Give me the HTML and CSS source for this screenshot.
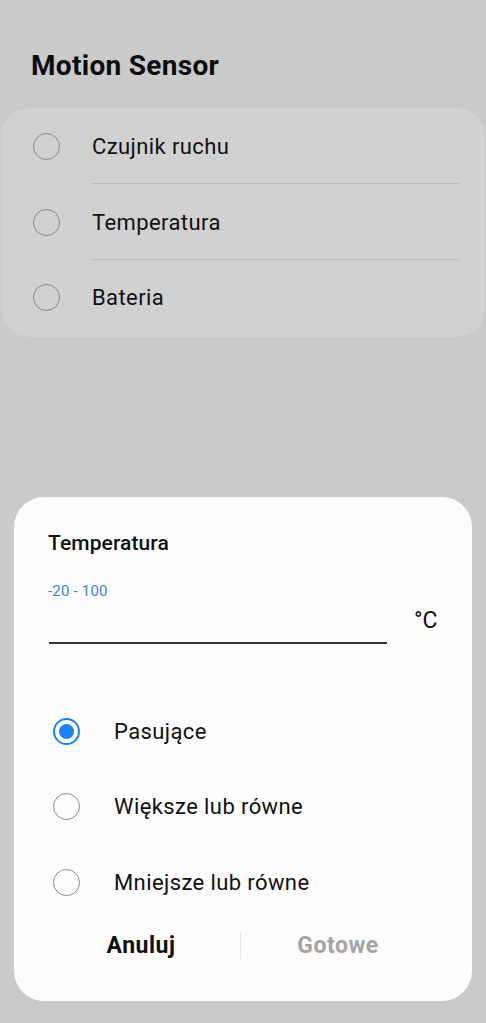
FILE: index.html
```html
<!DOCTYPE html>
<html lang="pl">
<head>
    <meta charset="UTF-8">
    <meta name="viewport" content="width=device-width, initial-scale=1.0">
    <title>Motion Sensor</title>
    <link rel="stylesheet" href="styles.css">
</head>
<body>
    <div class="page-header">
        <h1 class="page-title">Motion Sensor</h1>
    </div>

    <div class="option-card">
        <div class="option-row">
            <span class="radio"></span>
            <span class="option-label">Czujnik ruchu</span>
        </div>
        <div class="option-row">
            <span class="radio"></span>
            <span class="option-label">Temperatura</span>
        </div>
        <div class="option-row">
            <span class="radio"></span>
            <span class="option-label">Bateria</span>
        </div>
    </div>

    <div class="dialog">
        <h2 class="dialog-title">Temperatura</h2>
        <p class="range-hint">-20 - 100</p>
        <div class="value-row">
            <div class="value-input"></div>
            <span class="value-unit">°C</span>
        </div>

        <div class="choice-list">
            <div class="choice-row">
                <span class="radio radio-on"></span>
                <span class="choice-label">Pasujące</span>
            </div>
            <div class="choice-row">
                <span class="radio"></span>
                <span class="choice-label">Większe lub równe</span>
            </div>
            <div class="choice-row">
                <span class="radio"></span>
                <span class="choice-label">Mniejsze lub równe</span>
            </div>
        </div>

        <div class="dialog-buttons">
            <button class="dialog-button">Anuluj</button>
            <span class="button-divider"></span>
            <button class="dialog-button button-disabled">Gotowe</button>
        </div>
    </div>
</body>
</html>
```

FILE: styles.css
```css
* {
    margin: 0;
    padding: 0;
    box-sizing: border-box;
}

body {
    min-height: 100vh;
    background-color: #cacaca;
    font-family: Roboto, "Noto Sans", sans-serif;
    color: #101010;
    overflow: hidden;
}

.page-header {
    padding: 50px 31px 0;
}

.page-title {
    font-size: 28px;
    line-height: 32px;
    font-weight: 700;
    letter-spacing: 0.3px;
    color: #0c0c0c;
}

.option-card {
    margin: 26px 1px 0;
    padding: 1px 0;
    background-color: #d1d1d1;
    border-radius: 28px;
}

.option-row {
    position: relative;
    display: flex;
    align-items: center;
    height: 75.5px;
    padding-left: 32px;
}

.option-row + .option-row::before {
    content: "";
    position: absolute;
    top: -1.5px;
    left: 91px;
    right: 26px;
    height: 1px;
    background-color: #bcbcbc;
}

.option-label {
    margin-left: 32px;
    font-size: 22px;
    letter-spacing: 0.4px;
    color: #111;
}

.radio {
    flex: none;
    width: 27px;
    height: 27px;
    border: 1.5px solid #8a8a8a;
    border-radius: 50%;
}

.radio-on {
    border: 2px solid #1c83f4;
    display: flex;
    align-items: center;
    justify-content: center;
}

.radio-on::after {
    content: "";
    width: 15px;
    height: 15px;
    border-radius: 50%;
    background-color: #1c83f4;
}

/* bottom dialog over the dimmed page */
.dialog {
    position: fixed;
    left: 14px;
    right: 14px;
    bottom: 22px;
    background-color: #fcfcfc;
    border-radius: 30px;
    padding: 34px 34px 30px;
}

.dialog-title {
    font-size: 21px;
    line-height: 24px;
    font-weight: 500;
    letter-spacing: 0.1px;
    color: #111;
}

.range-hint {
    margin-top: 27px;
    font-size: 15px;
    line-height: 18px;
    letter-spacing: 0.2px;
    color: #3a85c8;
}

.value-row {
    display: flex;
    align-items: flex-end;
}

.value-input {
    width: 338px;
    height: 44px;
    margin-left: 1px;
    border-bottom: 2px solid #333;
}

.value-unit {
    margin-left: 27px;
    margin-bottom: 10px;
    font-size: 23px;
    line-height: 26px;
    color: #111;
}

.choice-list {
    margin-top: 50px;
}

.choice-row {
    display: flex;
    align-items: center;
    height: 75.5px;
    padding-left: 5px;
}

.choice-label {
    margin-left: 34px;
    font-size: 22px;
    letter-spacing: 0.4px;
    color: #111;
}

.dialog-buttons {
    display: grid;
    grid-template-columns: 198px 1px 194px;
    align-items: center;
    height: 51px;
    margin-left: -6px;
}

.dialog-button {
    background: none;
    border: none;
    font-family: inherit;
    font-size: 23px;
    font-weight: 700;
    letter-spacing: 0.5px;
    color: #111;
}

.button-disabled {
    color: #a4a4a4;
}

.button-divider {
    height: 26px;
    background-color: #e4e4e4;
}
```
